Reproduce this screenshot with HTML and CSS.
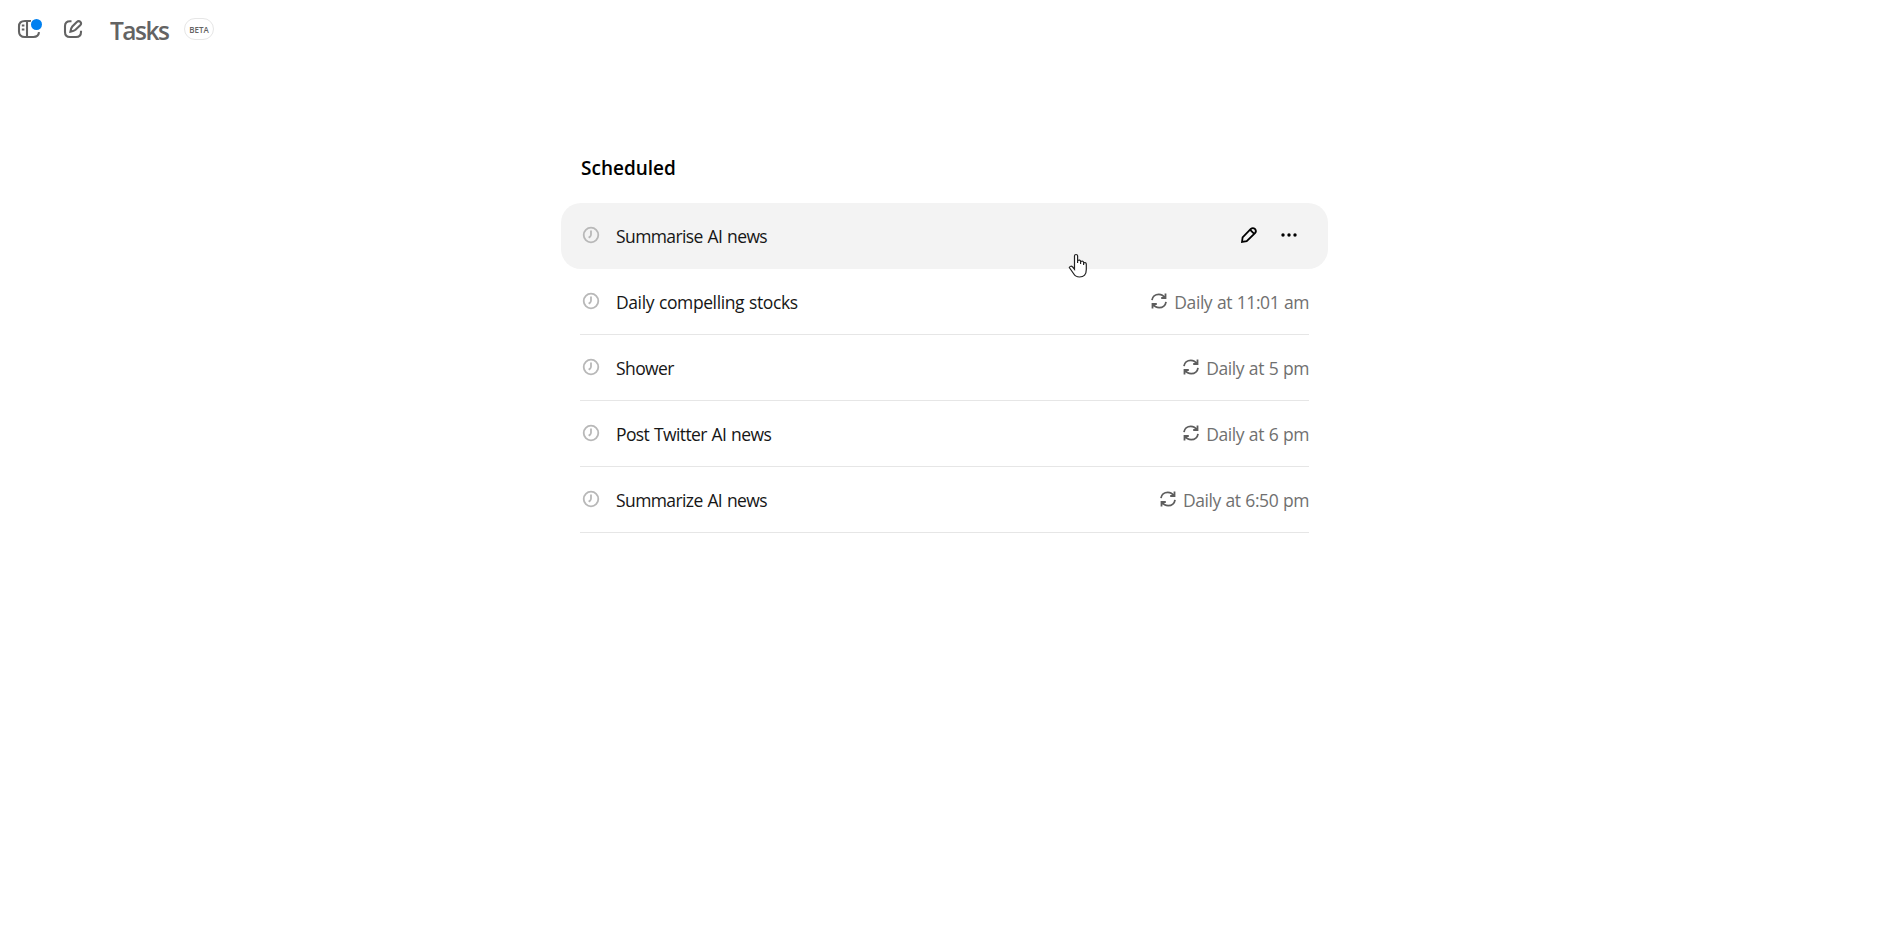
FILE: index.html
```html
<!DOCTYPE html>
<html lang="en">
<head>
    <meta charset="UTF-8">
    <meta name="viewport" content="width=device-width, initial-scale=1.0">
    <title>Tasks</title>
    <link rel="stylesheet" href="styles.css">
</head>
<body>
    <!-- shared icons -->
    <svg class="sprite" aria-hidden="true">
        <symbol id="clock" viewBox="0 0 18 18">
            <circle cx="9" cy="9" r="7.3" />
            <path d="M9 4.6V8.6Q9 9.7 8.2 10.5L6.7 11.7" />
        </symbol>
        <symbol id="repeat" viewBox="0 0 18 18">
            <path d="M2 8.2C2.4 4.8 5.2 2.4 8.8 2.4C11.3 2.4 13.6 3.7 14.9 5.8M15.5 1.6V6H11.2" />
            <path d="M16 9.8C15.6 13.2 12.8 15.6 9.2 15.6C6.7 15.6 4.4 14.3 3.1 12.2M2.5 16.4V12H6.8" />
        </symbol>
    </svg>

    <header class="topbar">
        <button class="icon-btn sidebar-btn" aria-label="Open sidebar">
            <svg width="24" height="20" viewBox="0 0 24 20">
                <path d="M14 2H8Q2 2 2 7.5V12.5Q2 18 8 18H16.5Q21.5 18 22 13.2M10 2V18" />
                <path d="M4.8 6.5H7.4M4.8 10.5H7.4" />
            </svg>
            <span class="dot"></span>
        </button>
        <button class="icon-btn" aria-label="New chat">
            <svg width="20" height="20" viewBox="0 0 20 20">
                <path d="M8.5 2.2H7Q2 2.2 2 7V13Q2 18 7 18H13Q18 18 18 13V11.8" />
                <path d="M17.4 2.9Q15.6 1.4 13.8 3L9.3 7.5Q8 9 7.4 12.6Q11 12 12.5 10.7L17.2 6.2Q18.8 4.5 17.4 2.9Z" />
            </svg>
        </button>
        <h1 class="title">Tasks</h1>
        <span class="badge">BETA</span>
    </header>

    <main class="content">
        <h2 class="heading">Scheduled</h2>
        <ul class="task-list">
            <li class="task active">
                <svg class="clock"><use href="#clock" /></svg>
                <span class="name">Summarise AI news</span>
                <div class="actions">
                    <svg width="18" height="18" viewBox="0 0 18 18">
                        <path d="M2 16L2.6 11.5L10.8 3Q12.8 1.2 15 3Q16.8 5 15 7.2L6.7 15.2ZM10.2 3.8L14.2 7.8" />
                    </svg>
                    <svg class="dots" width="18" height="18" viewBox="0 0 18 18">
                        <circle cx="3" cy="9" r="1.7" />
                        <circle cx="9" cy="9" r="1.7" />
                        <circle cx="15" cy="9" r="1.7" />
                    </svg>
                </div>
                <svg class="cursor" width="20" height="26" viewBox="0 0 20 26">
                    <path d="M6.5 16.2V3Q6.5 1.5 8 1.5Q9.6 1.5 9.6 3V10V7.5Q12.3 6.2 12.6 8.5V11V8.5Q15.3 7.5 15.6 9.5V12V9.8Q18.3 9 18.3 11.5V16.5Q18.3 24 11.5 24Q7.5 24 5.5 20.5L1.3 14.5Q2.6 12.2 4.7 14Z" />
                </svg>
            </li>
            <li class="task">
                <svg class="clock"><use href="#clock" /></svg>
                <span class="name long">Daily compelling stocks</span>
                <svg class="repeat"><use href="#repeat" /></svg>
                <span class="time">Daily at 11:01 am</span>
            </li>
            <li class="task">
                <svg class="clock"><use href="#clock" /></svg>
                <span class="name">Shower</span>
                <svg class="repeat"><use href="#repeat" /></svg>
                <span class="time">Daily at 5 pm</span>
            </li>
            <li class="task">
                <svg class="clock"><use href="#clock" /></svg>
                <span class="name">Post Twitter AI news</span>
                <svg class="repeat"><use href="#repeat" /></svg>
                <span class="time">Daily at 6 pm</span>
            </li>
            <li class="task">
                <svg class="clock"><use href="#clock" /></svg>
                <span class="name">Summarize AI news</span>
                <svg class="repeat"><use href="#repeat" /></svg>
                <span class="time">Daily at 6:50 pm</span>
            </li>
        </ul>
    </main>
</body>
</html>
```
FILE: styles.css
```css
body {
    margin: 0;
    background: #fff;
    color: #161616;
    font-family: "Segoe UI", "Open Sans", sans-serif;
}

svg {
    fill: none;
    stroke: currentColor;
    stroke-width: 1.8;
    flex-shrink: 0;
}

.sprite {
    display: none;
}

.topbar {
    display: flex;
    align-items: center;
    height: 58px;
    padding-left: 17px;
    color: #636363;
}

.icon-btn {
    position: relative;
    display: flex;
    padding: 0;
    border: none;
    background: none;
    color: inherit;
}

.icon-btn svg {
    stroke-width: 2.1;
}

.sidebar-btn {
    margin-right: 22px;
}

.dot {
    position: absolute;
    top: 0;
    left: 14px;
    width: 11px;
    height: 11px;
    border-radius: 50%;
    background: #0080f0;
    box-shadow: 0 0 0 1px #fff;
}

.title {
    margin: 0 0 0 27px;
    padding-top: 4px;
    font-size: 24.5px;
    font-weight: 600;
    letter-spacing: -1.5px;
    line-height: 54px;
    width: 74px;
}

.badge {
    box-sizing: border-box;
    width: 30px;
    height: 22px;
    border: 1px solid #e6e6e6;
    border-radius: 11px;
    font-size: 8px;
    font-weight: 600;
    line-height: 22px;
    text-align: center;
}

.content {
    width: 767px;
    margin: 0 auto;
    padding: 92px 10px 0 0;
}

.heading {
    margin: 0 0 17px 20px;
    color: #000;
    font-size: 19px;
    font-weight: 600;
    line-height: 36px;
}

.task-list {
    margin: 0;
    padding: 0;
    list-style: none;
}

.task {
    display: flex;
    align-items: center;
    box-sizing: border-box;
    height: 66px;
    margin: 0 19px;
    padding-left: 2px;
    border-bottom: 1px solid #e6e6e6;
    font-size: 17.5px;
}

.active {
    position: relative;
    margin: 0;
    padding: 0 18px 0 21px;
    border-bottom: none;
    border-radius: 20px;
    background: #f3f3f3;
}

.clock {
    width: 18px;
    height: 18px;
    margin: 0 16px 2px 0;
    color: #b8b8b8;
}

.name {
    flex: 1;
    letter-spacing: -0.6px;
    word-spacing: 0.8px;
}

.name.long {
    letter-spacing: -0.4px;
}

.repeat {
    width: 18px;
    height: 18px;
    margin: 0 6px 2px 0;
    color: #5d5d5d;
}

.time {
    color: #707070;
    letter-spacing: -0.43px;
    word-spacing: 0.6px;
}

.actions {
    display: flex;
    gap: 22px;
    padding: 0 12px 2px 0;
    color: #000;
}

.dots {
    fill: currentColor;
    stroke: none;
}

.cursor {
    position: absolute;
    left: 507px;
    top: 50px;
    fill: #fff;
    stroke: #222;
    stroke-width: 1.2;
}
```
